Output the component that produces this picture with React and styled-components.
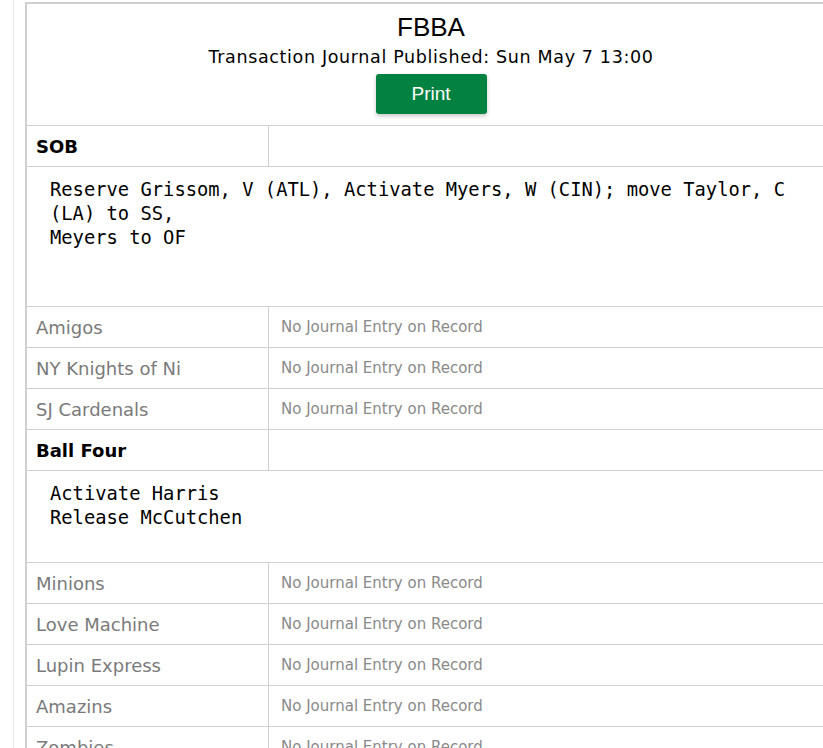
import React from "react";
import styled, { createGlobalStyle } from "styled-components";

const Global = createGlobalStyle`
  html, body { margin: 0; padding: 0; overflow: hidden; background: #fff; }
  body { font-family: "DejaVu Sans", Verdana, sans-serif; }
`;

const Page = styled.div`
  margin-left: 13px;
  border-left: 1px solid #e6e6e6;
  padding: 2px 0 0 11px;
  min-height: 760px;
`;

const Sheet = styled.div`
  width: 810px;
  border-top: 2px solid #cfcfcf;
  border-left: 2px solid #cfcfcf;
  box-sizing: border-box;
`;

const Header = styled.div`
  display: flex;
  flex-direction: column;
  align-items: center;
  padding: 8px 0 11px;
  border-bottom: 1px solid #d0d0d0;
`;

const Title = styled.div`
  font-family: "Liberation Sans", Arial, sans-serif;
  font-size: 26px;
  line-height: 30px;
  color: #000;
`;

const Subtitle = styled.div`
  margin-top: 4px;
  font-size: 17.5px;
  letter-spacing: 0.65px;
  line-height: 22px;
  color: #000;
`;

const PrintButton = styled.button`
  margin-top: 6px;
  width: 111px;
  height: 40px;
  border: none;
  border-radius: 3px;
  background: #028241;
  color: #fff;
  font-family: "Liberation Sans", Arial, sans-serif;
  font-size: 19px;
  box-shadow: 0 2px 4px rgba(0, 0, 0, 0.22);
  cursor: pointer;
`;

const Row = styled.div`
  display: grid;
  grid-template-columns: 242px 1fr;
  border-bottom: 1px solid #d0d0d0;
  height: 41px;
  box-sizing: border-box;
`;

const NameCell = styled.div`
  display: flex;
  align-items: center;
  padding-left: 9px;
  border-right: 1px solid #d0d0d0;
  font-size: 18px;
  font-weight: ${(p) => (p.$active ? 700 : 400)};
  color: ${(p) => (p.$active ? "#000" : "#7a7a7a")};
`;

const EntryCell = styled.div`
  display: flex;
  align-items: center;
  padding-left: 12px;
  font-size: 15px;
  color: #8a8a8a;
`;

const Journal = styled.pre`
  margin: 0;
  padding: 11px 20px ${(p) => (p.$trail ? 56 : 32)}px 23px;
  border-bottom: 1px solid #d0d0d0;
  font-family: "DejaVu Sans Mono", Consolas, monospace;
  font-size: 18.8px;
  line-height: 24px;
  color: #000;
  white-space: pre;
`;

const teams = [
  {
    name: "SOB",
    entry:
      "Reserve Grissom, V (ATL), Activate Myers, W (CIN); move Taylor, C\n(LA) to SS,\nMeyers to OF",
    trail: true,
  },
  { name: "Amigos" },
  { name: "NY Knights of Ni" },
  { name: "SJ Cardenals" },
  { name: "Ball Four", entry: "Activate Harris\nRelease McCutchen" },
  { name: "Minions" },
  { name: "Love Machine" },
  { name: "Lupin Express" },
  { name: "Amazins" },
  { name: "Zombies" },
];

export default function App() {
  return (
    <>
      <Global />
      <Page>
        <Sheet>
          <Header>
            <Title>FBBA</Title>
            <Subtitle>Transaction Journal Published: Sun May 7 13:00</Subtitle>
            <PrintButton>Print</PrintButton>
          </Header>
          {teams.map((t) => (
            <React.Fragment key={t.name}>
              <Row>
                <NameCell $active={!!t.entry}>{t.name}</NameCell>
                <EntryCell>{t.entry ? "" : "No Journal Entry on Record"}</EntryCell>
              </Row>
              {t.entry && <Journal $trail={t.trail}>{t.entry}</Journal>}
            </React.Fragment>
          ))}
        </Sheet>
      </Page>
    </>
  );
}
